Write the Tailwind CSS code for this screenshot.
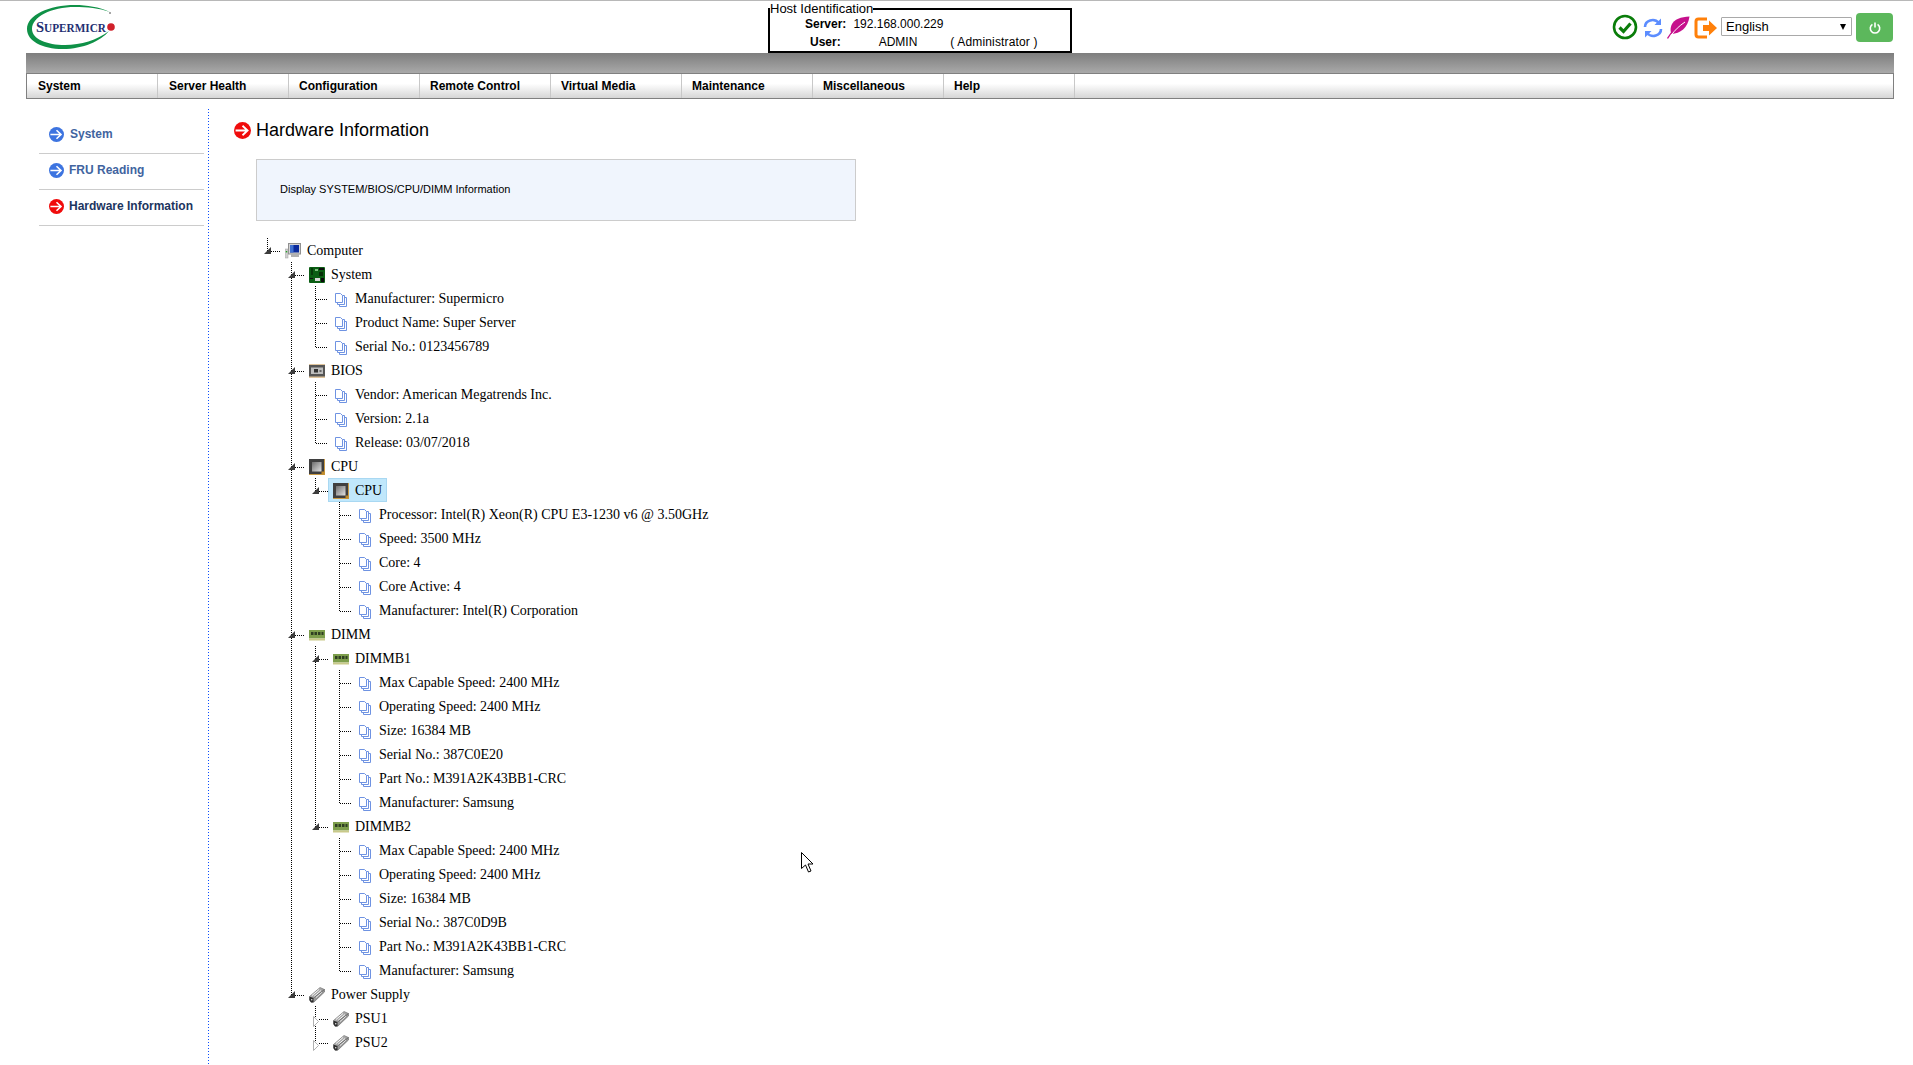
<!DOCTYPE html>
<html lang="en">
<head>
<meta charset="UTF-8">
<title>Hardware Information</title>
<script src="https://cdn.jsdelivr.net/npm/@tailwindcss/browser@4"></script>
</head>
<body class="bg-white h-[1065px] overflow-hidden relative font-['Liberation_Sans',Arial,sans-serif] text-black">

<!-- shared icons -->
<svg class="absolute w-0 h-0">
  <defs>
    <linearGradient id="cpu-g" x1="0" y1="0" x2="1" y2="1"><stop offset="0" stop-color="#6e6e6e"/><stop offset="1" stop-color="#e2e2e2"/></linearGradient>
    <linearGradient id="psu-g" x1="0" y1="0" x2="1" y2="1"><stop offset="0" stop-color="#d4d4d4"/><stop offset="1" stop-color="#707070"/></linearGradient>
  </defs>
  <symbol id="i-doc" viewBox="0 0 16 16">
    <path d="M6.500 6.500h7v9h-7z" fill="#fff" stroke="#6f93e2"/>
    <path d="M4.500 4.500h7v9h-7z" fill="#fff" stroke="#6f93e2"/>
    <path d="M2.500 2.500h5l2 2v7h-7z" fill="#fff" stroke="#6f93e2"/>
  </symbol>
  <symbol id="i-arrow" viewBox="0 0 16 16">
    <path d="M1.500 8h11M8 3.500 12.800 8 8 12.500" fill="none" stroke="#fff" stroke-width="1.700"/>
  </symbol>
  <symbol id="i-computer" viewBox="0 0 16 16">
    <rect x="3.500" y=".5" width="12" height="10.500" fill="#d4d4d4" stroke="#909090"/>
    <rect x="5" y="2" width="9" height="7.500" fill="#0a2a9c"/>
    <rect x="5" y="2" width="3.500" height="7.500" fill="#3f70d0"/>
    <rect x="6" y="11" width="8" height="3" fill="#b0b0b0"/>
    <rect x="0" y="6" width="3" height="9" fill="#cfcfcf" stroke="#a0a0a0" stroke-width=".5"/>
    <rect x=".8" y="8" width="1.400" height="1.400" fill="#22a022"/>
  </symbol>
  <symbol id="i-board" viewBox="0 0 16 16">
    <rect width="16" height="16" rx="1" fill="#0b5e14"/>
    <rect x="2" y="1" width="2" height="7" fill="#063a0a"/>
    <rect x="6" y="2" width="3" height="2" fill="#7fbf7f"/>
    <rect x="10" y="1" width="5" height="2" fill="#0d0d0d"/>
    <rect x="10" y="5" width="4" height="4" fill="#062f08"/>
    <rect x="6" y="11" width="5" height="3" fill="#d8d8d8"/>
    <rect x="1" y="11" width="3" height="1" fill="#111"/>
    <rect x="12" y="11" width="3" height="4" fill="#0a0a0a"/>
  </symbol>
  <symbol id="i-bios" viewBox="0 0 16 16">
    <path d="M1 3V1m2 2V1m2 2V1m2 2V1m2 2V1m2 2V1m2 2V1m2 2V1M1 15v-2m2 2v-2m2 2v-2m2 2v-2m2 2v-2m2 2v-2m2 2v-2m2 2v-2" stroke="#c08a3a" fill="none" stroke-width="1"/>
    <rect y="2" width="16" height="11.500" fill="#555"/>
    <rect x="2" y="4.500" width="12" height="6.500" fill="#bdbdbd"/>
    <rect x="5" y="6" width="4" height="3.500" fill="#333"/>
    <rect x="10.500" y="7" width="2" height="2" fill="#666"/>
  </symbol>
  <symbol id="i-cpu" viewBox="0 0 16 16">
    <rect width="16" height="16" fill="#c99a45"/>
    <rect width="15" height="15" fill="#3f3f3f"/>
    <rect x="3" y="3" width="9.500" height="9.500" fill="url(#cpu-g)"/>
    <rect x="12.500" y="12.500" width="3" height="3" fill="#c08a2a"/>
  </symbol>
  <symbol id="i-dimm" viewBox="0 0 16 16">
    <rect y="3" width="16" height="8.500" fill="#7d9e4c"/>
    <rect x="2" y="5" width="2.500" height="3" fill="#2f3f22"/>
    <rect x="5.500" y="5" width="2.500" height="3" fill="#2f3f22"/>
    <rect x="9" y="5" width="2.500" height="3" fill="#2f3f22"/>
    <rect x="12.500" y="5" width="2" height="3" fill="#2f3f22"/>
    <rect y="11.500" width="16" height="2" fill="#c9c98a"/>
  </symbol>
  <symbol id="i-psu" viewBox="0 0 16 16">
    <path d="M.5 9.500 11 .5l4.500 2v2.500L5 15H2L.5 13z" fill="url(#psu-g)" stroke="#666" stroke-width=".6"/>
    <path d="M.5 9.500 4.500 11v4.500H2L.5 13z" fill="#2e2e2e"/>
    <rect x="2" y="12" width="1.400" height="1.400" fill="#ccc"/>
    <path d="M3 8.500 10 2.500M5 9.500 12 3.500M7 10.500 13 5" stroke="#fff" fill="none" stroke-width=".9"/>
    <path d="M4.500 11 15.500 2.500" stroke="#555" fill="none" stroke-width=".7"/>
  </symbol>
</svg>

<!-- top rule -->
<div class="h-px bg-[#b8b8b8]"></div>

<header class="flex h-[52px] pl-[27px] pr-[20px]">
  <svg class="w-[90px] h-[46px] mt-[3px] shrink-0" viewBox="0 0 90 46">
    <path fill="#0f9147" d="M83 8C72 3 60 1 48 1 22 1 0 11 0 25 0 37 15 45 36 45 56 45 74 37 82 27 70 36 54 41 38 41 20 41 5 35 5 25 5 13 24 3 48 3 60 3 72 4 83 8z"/>
    <text x="9" y="28" font-family="Liberation Serif" font-weight="bold" font-size="15.500" fill="#1f2f72" textLength="70" lengthAdjust="spacingAndGlyphs">S<tspan font-size="12">UPERMICR</tspan></text>
    <circle cx="84" cy="23" r="3.800" fill="#d0202a"/>
    <circle cx="83" cy="9" r="1" fill="#888"/>
  </svg>

  <fieldset class="ml-[651px] mt-[1px] w-[304px] h-[51px] border-2 border-black text-[12px] leading-[18px] shrink-0">
    <legend class="ml-0 leading-[14px] text-[13px]">Host Identification</legend>
    <div class="flex pl-[35px] -mt-[1px]"><b>Server:</b><span class="ml-[7px]">192.168.000.229</span></div>
    <div class="flex pl-[40px]"><b>User:</b><span class="ml-[38px]">ADMIN</span><span class="ml-[33px] tracking-[0.15px]">( Administrator )</span></div>
  </fieldset>

  <div class="ml-auto flex items-start">
    <!-- status check -->
    <svg class="w-[26px] h-[26px] mt-[13px]" viewBox="0 0 26 26">
      <circle cx="13" cy="13" r="11" fill="#fff" stroke="#0a7d0a" stroke-width="2.600"/>
      <path d="M7.500 13.500 11.500 17.500 18.500 9.500" fill="none" stroke="#0a7d0a" stroke-width="3.200"/>
    </svg>
    <!-- refresh -->
    <svg class="w-[20px] h-[22px] ml-[5px] mt-[16px]" viewBox="0 0 20 22" fill="none" stroke="#5c8dff" stroke-width="2.600">
      <path d="M2 10C2 3.500 11 .5 16 6"/><path d="M18 12c0 6.500-9 9.500-14 4"/>
      <path d="M18 1.500V8h-6.500z" fill="#5c8dff" stroke="none"/><path d="M2 20.500V14h6.500z" fill="#5c8dff" stroke="none"/>
    </svg>
    <!-- leaf -->
    <svg class="w-[23px] h-[23px] ml-[4px] mt-[15px]" viewBox="0 0 23 23">
      <path d="M22.500.5C14 1 7 3 4.500 9c-1.500 4-1 7 0 9C13 17.500 21 12 22.500.5z" fill="#c6108c"/>
      <path d="M.5 22.500C5 15 10 10 17 6" stroke="#c6108c" fill="none" stroke-width="1.400"/>
      <path d="M4 19.500C8 14 12 10 18 6" stroke="#fff" fill="none"/>
    </svg>
    <!-- logout -->
    <svg class="w-[24px] h-[22px] ml-[4px] mt-[16px]" viewBox="0 0 24 22">
      <path d="M13 2H4.500A2.500 2.500 0 0 0 2 4.500v13A2.500 2.500 0 0 0 4.500 20H13" fill="none" stroke="#ff800a" stroke-width="3"/>
      <path d="M9 8h6V3.500l8 7.500-8 7.500V14H9z" fill="#ff800a"/>
    </svg>
    <!-- language -->
    <div class="relative w-[131px] h-[19px] ml-[3px] mt-[16px] border border-[#a9a9a9] bg-white text-[13px] leading-[17px] pl-[4px] rounded-[1px]">English
      <span class="absolute right-[5px] top-[6px] border-x-[3.500px] border-t-[6px] border-x-transparent border-t-black"></span>
    </div>
    <!-- power -->
    <button class="w-[37px] h-[29px] ml-[4px] mt-[12px] bg-[#5cb85c] rounded-[4px] flex items-center justify-center">
      <svg class="w-[12px] h-[12px]" viewBox="0 0 12 12" fill="none" stroke="#fff" stroke-width="1.600">
        <path d="M3.400 2.400a4.700 4.700 0 1 0 5.200 0"/><path d="M6 .5v5"/>
      </svg>
    </button>
  </div>
</header>

<!-- menu -->
<nav class="ml-[26px] w-[1868px]">
  <div class="h-[20px] bg-gradient-to-b from-[#7e7e7e] to-[#a9a9a9]"></div>
  <ul class="flex h-[26px] border border-[#808080] bg-gradient-to-b from-white from-40% to-[#d6d6d6] text-[12px] font-bold">
    <li class="w-[131px] border-r border-[#c8c8c8] pl-[11px] leading-[24px]">System</li>
    <li class="w-[131px] border-r border-[#c8c8c8] pl-[11px] leading-[24px]">Server Health</li>
    <li class="w-[131px] border-r border-[#c8c8c8] pl-[10px] leading-[24px]">Configuration</li>
    <li class="w-[131px] border-r border-[#c8c8c8] pl-[10px] leading-[24px]">Remote Control</li>
    <li class="w-[131px] border-r border-[#c8c8c8] pl-[10px] leading-[24px]">Virtual Media</li>
    <li class="w-[131px] border-r border-[#c8c8c8] pl-[10px] leading-[24px]">Maintenance</li>
    <li class="w-[131px] border-r border-[#c8c8c8] pl-[10px] leading-[24px]">Miscellaneous</li>
    <li class="w-[131px] border-r border-[#c8c8c8] pl-[10px] leading-[24px]">Help</li>
  </ul>
</nav>

<div class="flex mt-[9px]">
  <aside class="w-[208px] shrink-0 pl-[39px] pr-[4px] pt-[10px] text-[12px] font-bold">
    <a class="flex items-center h-[36px] border-b border-[#cccccc] pl-[10px] pb-[3px] text-[#41649f]">
      <span class="w-[15px] h-[15px] rounded-full bg-[#3d74e0] mr-[6px]"><svg class="w-[15px] h-[15px]"><use href="#i-arrow"/></svg></span>System
    </a>
    <a class="flex items-center h-[36px] border-b border-[#cccccc] pl-[10px] pb-[3px] text-[#41649f]">
      <span class="w-[15px] h-[15px] rounded-full bg-[#3d74e0] mr-[5px]"><svg class="w-[15px] h-[15px]"><use href="#i-arrow"/></svg></span>FRU Reading
    </a>
    <a class="flex items-center h-[36px] border-b border-[#cccccc] pl-[10px] pb-[3px] text-[#1c3560]">
      <span class="w-[15px] h-[15px] rounded-full bg-[#f00c0c] mr-[5px]"><svg class="w-[15px] h-[15px]"><use href="#i-arrow"/></svg></span>Hardware Information
    </a>
  </aside>

  <!-- dotted divider -->
  <div class="w-px h-[957px] mt-[1px] bg-[repeating-linear-gradient(180deg,#0a4dff_0_1px,transparent_1px_3px)]"></div>

  <main class="flex-1 pl-[25px] pt-[10px]">
    <h1 class="flex items-center h-[24px] text-[18px] leading-[24px]">
      <span class="w-[17px] h-[17px] rounded-full bg-[#f00c0c] mr-[5px]"><svg class="w-[17px] h-[17px]"><use href="#i-arrow"/></svg></span>Hardware Information
    </h1>
    <div class="ml-[22px] mt-[17px] w-[600px] h-[62px] bg-[#f0f5fd] border border-[#cccccc] flex items-center pl-[23px] pb-[2px] text-[11px]">Display SYSTEM/BIOS/CPU/DIMM Information</div>
    <ul id="tree" class="ml-[28px] mt-[17px] font-['Liberation_Serif','Times_New_Roman',serif] text-[14px]"></ul>
  </main>
</div>

<!-- mouse pointer -->
<svg class="absolute left-[801px] top-[852px] w-[13px] h-[21px]" viewBox="0 0 13 21">
  <path d="M.5.5v16l4-3.500 3 7 2.500-1-3-7H12z" fill="#fff" stroke="#000"/>
</svg>

<script>
// tree data: [label, icon, children, collapsed, selected]
const doc = (label) => [label, "i-doc"];
const dimmRows = (serial) => [
  doc("Max Capable Speed: 2400 MHz"),
  doc("Operating Speed: 2400 MHz"),
  doc("Size: 16384 MB"),
  doc("Serial No.: " + serial),
  doc("Part No.: M391A2K43BB1-CRC"),
  doc("Manufacturer: Samsung"),
];
const tree = [
  ["Computer", "i-computer", [
    ["System", "i-board", [doc("Manufacturer: Supermicro"), doc("Product Name: Super Server"), doc("Serial No.: 0123456789")]],
    ["BIOS", "i-bios", [doc("Vendor: American Megatrends Inc."), doc("Version: 2.1a"), doc("Release: 03/07/2018")]],
    ["CPU", "i-cpu", [
      ["CPU", "i-cpu", [
        doc("Processor: Intel(R) Xeon(R) CPU E3-1230 v6 @ 3.50GHz"),
        doc("Speed: 3500 MHz"),
        doc("Core: 4"),
        doc("Core Active: 4"),
        doc("Manufacturer: Intel(R) Corporation"),
      ], false, true],
    ]],
    ["DIMM", "i-dimm", [
      ["DIMMB1", "i-dimm", dimmRows("387C0E20")],
      ["DIMMB2", "i-dimm", dimmRows("387C0D9B")],
    ]],
    ["Power Supply", "i-psu", [
      ["PSU1", "i-psu", [], true],
      ["PSU2", "i-psu", [], true],
    ]],
  ]],
];

const dash9 = '<span class="relative top-[1px] w-[9px] h-px bg-[repeating-linear-gradient(90deg,#000_0_1px,transparent_1px_2px)]"></span>';
const dash12 = '<span class="relative top-[1px] ml-[6px] w-[12px] h-px bg-[repeating-linear-gradient(90deg,#000_0_1px,transparent_1px_2px)]"></span>';

function toggle(node) {
  if (node[3]) {
    return '<svg class="relative top-[3px] ml-[3px] w-[6px] h-[11px] shrink-0" viewBox="0 0 6 11"><path d="M.5.5 5.500 5.500.5 10.500z" fill="#fff" stroke="#b0b0b0"/></svg>' + dash9;
  }
  if (node[2]) {
    return '<svg class="relative ml-[2px] w-[7px] h-[7px] shrink-0" viewBox="0 0 7 7"><path d="M7 0V7H0z" fill="#3c3c3c"/></svg>' + dash9;
  }
  return dash12;
}

function renderNode(node, last) {
  const line = '<span class="absolute left-[5px] top-0 w-px bg-[repeating-linear-gradient(180deg,#000_0_1px,transparent_1px_2px)] ' + (last ? 'h-[14px]' : 'h-full') + '"></span>';
  const box = node[4]
    ? 'bg-[#c0e7fb] border border-[#a9d8f2] pl-[4px] pr-[4px]'
    : 'border border-transparent pl-[4px] pr-[4px]';
  const row = '<div class="flex items-center h-6">' + toggle(node) +
    '<span class="flex items-center h-6 whitespace-nowrap ' + box + '"><svg class="w-4 h-4 mt-[1px] mr-[6px] shrink-0"><use href="#' + node[1] + '"/></svg>' + node[0] + '</span></div>';
  const kids = node[2] && node[2].length ? '<ul class="ml-6">' + renderList(node[2]) + '</ul>' : '';
  return '<li class="relative">' + line + row + kids + '</li>';
}

function renderList(nodes) {
  return nodes.map((n, i) => renderNode(n, i === nodes.length - 1)).join("");
}

document.getElementById("tree").innerHTML = renderList(tree);
</script>
</body>
</html>
